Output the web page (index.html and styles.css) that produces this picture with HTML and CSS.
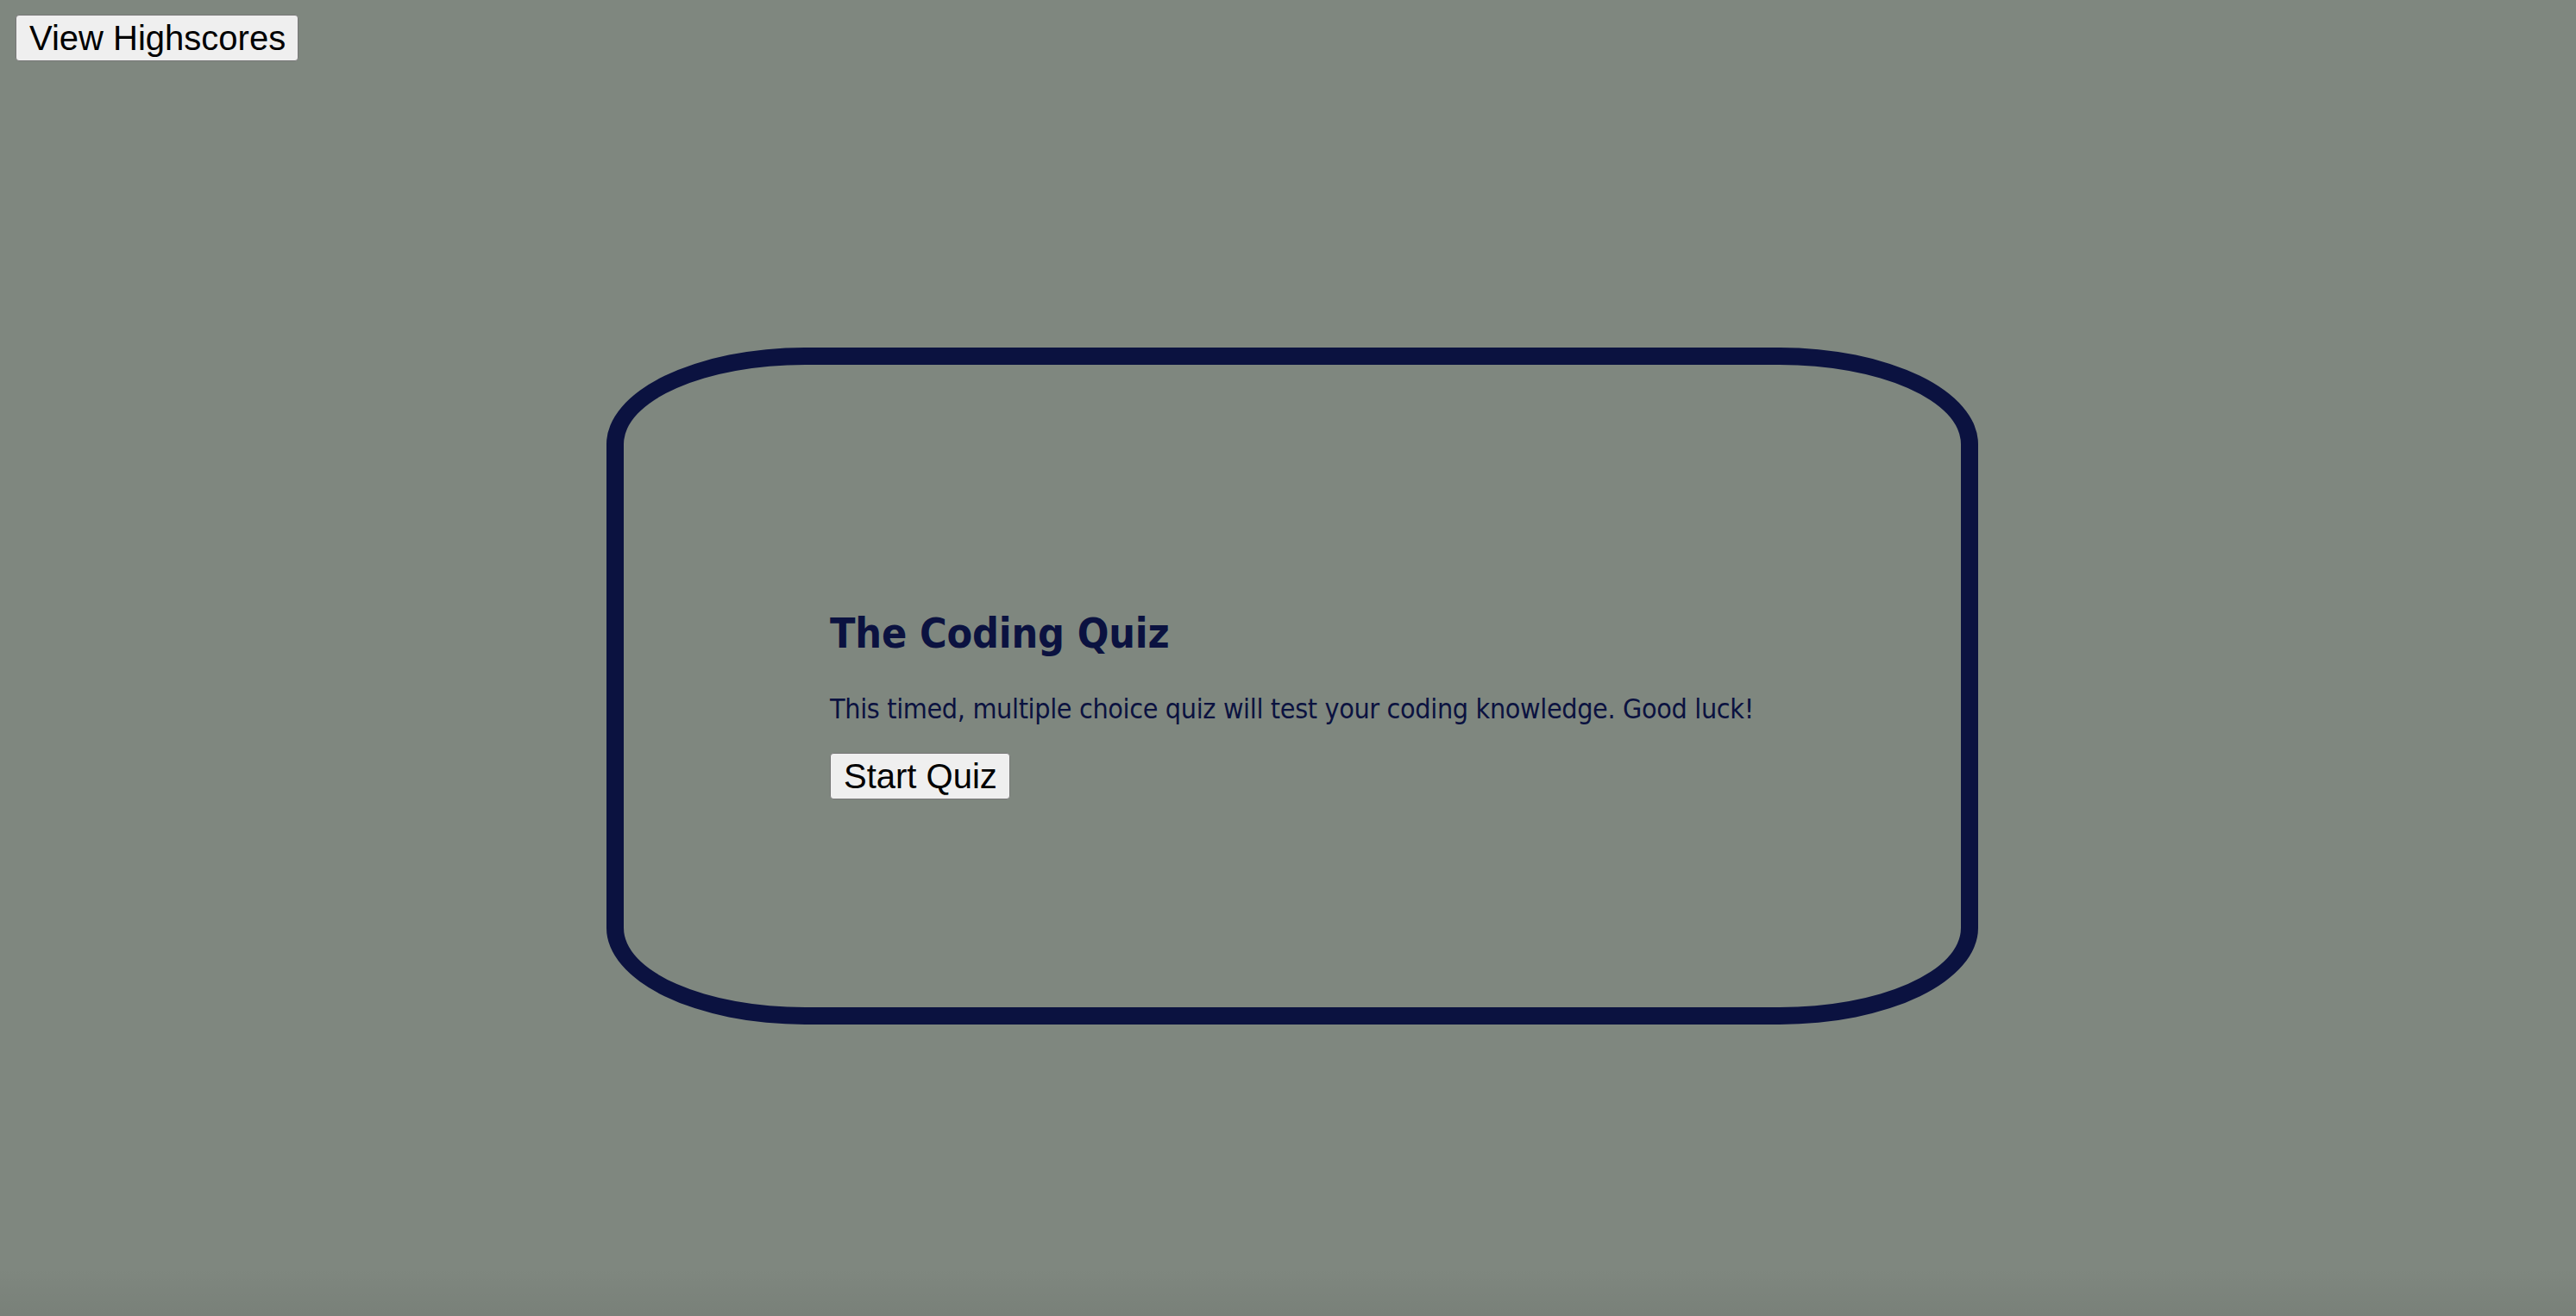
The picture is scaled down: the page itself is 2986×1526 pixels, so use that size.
FILE: index.html
```html
<!DOCTYPE html>
<html lang="en">
<head>
<meta charset="utf-8">
<title>The Coding Quiz</title>
<link rel="stylesheet" href="styles.css">
</head>
<body>
  <header class="topbar">
    <button class="btn">View Highscores</button>
  </header>
  <main class="card">
    <div class="content">
      <h2 class="title">The Coding Quiz</h2>
      <p class="intro">This timed, multiple choice quiz will test your coding knowledge. Good luck!</p>
      <button class="btn">Start Quiz</button>
    </div>
  </main>
</body>
</html>
```

FILE: styles.css
```css
html, body {
  margin: 0;
  padding: 0;
}
html {
  background: #7f877f;
}
body {
  background: linear-gradient(to bottom, rgba(0, 0, 0, 0) 1470px, rgba(0, 0, 0, 0.05) 1526px);
  height: 1526px;
  overflow: hidden;
  box-sizing: border-box;
  padding: 17px 0 0 18px;
  font-family: "DejaVu Sans Condensed", "DejaVu Sans", sans-serif;
  color: #0b1240;
}
.topbar {
  display: flex;
  height: 54px;
}
.btn {
  font-family: "Liberation Sans", Arial, sans-serif;
  font-size: 40px;
  line-height: 46px;
  padding: 3px 14px 3px 15px;
  margin: 0;
  border: 1px solid #767676;
  border-radius: 4px;
  background: #efefef;
  color: #000;
  height: 54px;
  box-sizing: border-box;
}
.card {
  box-sizing: border-box;
  width: 1590px;
  height: 785px;
  margin: 332px 0 0 685px;
  border: 20px solid #0b1240;
  border-radius: 230px / 112px;
  padding: 283px 0 0 239px;
}
.content {
  display: flex;
  flex-direction: column;
  align-items: flex-start;
}
.title {
  margin: 0;
  font-size: 48px;
  line-height: 56px;
  font-weight: bold;
  letter-spacing: -0.15px;
}
.intro {
  margin: 40px 0 31px;
  font-size: 32px;
  line-height: 40px;
  letter-spacing: -0.35px;
}
```
